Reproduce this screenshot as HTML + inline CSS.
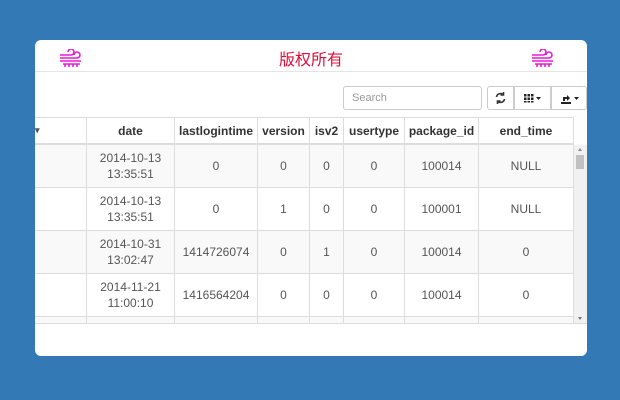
<!DOCTYPE html>
<html><head><meta charset="utf-8"><style>
body{margin:0;width:620px;height:400px;background:#3379b6;font-family:"Liberation Sans",Arial,sans-serif;position:relative;overflow:hidden}
.card{position:absolute;left:35px;top:40px;width:552px;height:316px;background:#fff;border-radius:6px;overflow:hidden}
.hdr{position:absolute;left:0;top:0;width:552px;height:31px;border-bottom:1px solid #e5e5e5}
.title{position:absolute;left:0;width:552px;top:6px;text-align:center;color:#e0103a;font-size:16px;font-family:"Liberation Sans","Noto Sans CJK SC",sans-serif}
.ic{position:absolute;top:9px}
.search{position:absolute;left:308px;top:46px;width:129px;height:22px;border:1px solid #ccc;border-radius:3px;font-size:11px;color:#999;line-height:22px;padding-left:8px}
.btn{position:absolute;top:46px;height:22px;border:1px solid #ccc;background:#fff}
.wrap{position:absolute;left:0;top:77px;width:552px;height:206px;overflow:hidden;border-bottom:1px solid #ddd}
table{border-collapse:collapse;font-size:12px;color:#333}
td,th{border:1px solid #ddd;text-align:center;padding:0}
th{height:25px;font-weight:bold;border-bottom:2px solid #ddd}
td{height:42px;line-height:16px;color:#555}
tr.g td{background:#f9f9f9}
.sb{position:absolute;left:539px;top:105px;width:13px;height:178px;background:#f1f1f1}
</style></head><body>
<div class="card">
 <div class="hdr">
  <svg class="ic" style="left:23px" width="25" height="20" viewBox="0 0 25 20" fill="none" stroke="#e81cd8" stroke-width="1.6"><path d="M2 6h11a3 3 0 1 0-3-3"/><path d="M2 9h17a3 3 0 1 0-3-3"/><path d="M2 12h21"/><path d="M5 15h17"/><path d="M7 15v3M11 15v3M15 15v3M19 15v3"/></svg>
  <div class="title">版权所有</div>
  <svg class="ic" style="left:495px" width="25" height="20" viewBox="0 0 25 20" fill="none" stroke="#e81cd8" stroke-width="1.6"><path d="M2 6h11a3 3 0 1 0-3-3"/><path d="M2 9h17a3 3 0 1 0-3-3"/><path d="M2 12h21"/><path d="M5 15h17"/><path d="M7 15v3M11 15v3M15 15v3M19 15v3"/></svg>
 </div>
 <div class="search">Search</div>
 <div class="btn" style="left:452px;width:25px;border-radius:3px 0 0 3px"><svg width="25" height="22" viewBox="0 0 25 22" fill="none" stroke="#333" stroke-width="1.6"><path d="M8.5 10a4 4 0 0 1 7-2M16.5 12a4 4 0 0 1-7 2"/><path d="M15.5 5v3h-3M9.5 17v-3h3"/></svg></div>
 <div class="btn" style="left:479px;width:35px"><svg width="35" height="22" viewBox="0 0 35 22" fill="#222"><rect x="9" y="7" width="2.5" height="2.5"/><rect x="12.5" y="7" width="2.5" height="2.5"/><rect x="16" y="7" width="2.5" height="2.5"/><rect x="9" y="10.5" width="2.5" height="2.5"/><rect x="12.5" y="10.5" width="2.5" height="2.5"/><rect x="16" y="10.5" width="2.5" height="2.5"/><rect x="9" y="14" width="2.5" height="1.5"/><rect x="12.5" y="14" width="2.5" height="1.5"/><rect x="16" y="14" width="2.5" height="1.5"/><path d="M21 10h5l-2.5 3z"/></svg></div>
 <div class="btn" style="left:516px;width:34px;border-radius:0 3px 3px 0"><svg width="34" height="22" viewBox="0 0 34 22" fill="#222"><rect x="9" y="15" width="10" height="2"/><path d="M11 14v-4h4v-2l3 3-3 3v-2h-2v2z"/><path d="M22 10h5l-2.5 3z"/></svg></div>
 <div class="wrap">
 <table>
  <tr><th style="width:51px;border-left:0;text-align:left;font-size:9px;color:#555">▾</th><th style="width:87px">date</th><th style="width:82px">lastlogintime</th><th style="width:51px">version</th><th style="width:33px">isv2</th><th style="width:60px">usertype</th><th style="width:73px">package_id</th><th style="width:94px">end_time</th><th style="width:13px;border:0"></th></tr>
  <tr class="g"><td style="border-left:0"></td><td>2014-10-13<br>13:35:51</td><td>0</td><td>0</td><td>0</td><td>0</td><td>100014</td><td>NULL</td><td style="border:0"></td></tr>
  <tr><td style="border-left:0"></td><td>2014-10-13<br>13:35:51</td><td>0</td><td>1</td><td>0</td><td>0</td><td>100001</td><td>NULL</td><td style="border:0"></td></tr>
  <tr class="g"><td style="border-left:0"></td><td>2014-10-31<br>13:02:47</td><td>1414726074</td><td>0</td><td>1</td><td>0</td><td>100014</td><td>0</td><td style="border:0"></td></tr>
  <tr><td style="border-left:0"></td><td>2014-11-21<br>11:00:10</td><td>1416564204</td><td>0</td><td>0</td><td>0</td><td>100014</td><td>0</td><td style="border:0"></td></tr>
  <tr class="g"><td style="border-left:0"></td><td></td><td></td><td></td><td></td><td></td><td></td><td></td><td style="border:0"></td></tr>
 </table>
 </div>
 <div class="sb"><div style="position:absolute;left:2px;top:10px;width:8px;height:14px;background:#c1c1c1"></div><div style="position:absolute;left:4px;top:3px;border:2.5px solid transparent;border-bottom:3px solid #888;border-top:0"></div><div style="position:absolute;left:4px;bottom:3px;border:2.5px solid transparent;border-top:3px solid #777;border-bottom:0"></div></div>
</div>
</body></html>
